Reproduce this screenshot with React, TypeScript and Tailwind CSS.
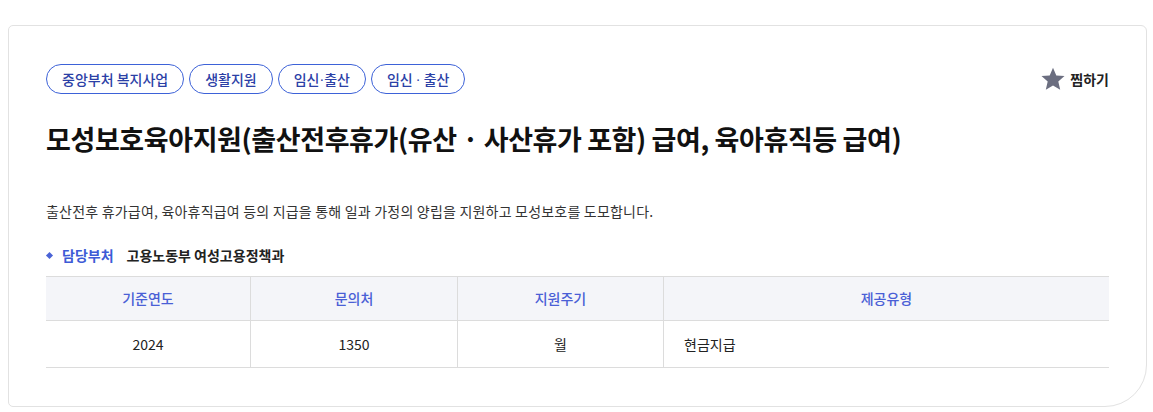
import React from "react";

const tags = ["중앙부처 복지사업", "생활지원", "임신·출산", "임신 · 출산"];

// 태그 안의 가운뎃점은 좁은 라틴 글꼴로 표시
function TagText({ text }: { text: string }) {
  const parts = text.split("·");
  return (
    <>
      {parts.map((p, i) => (
        <React.Fragment key={i}>
          {i > 0 && <span style={{ fontFamily: '"Liberation Sans", sans-serif' }}>·</span>}
          {p}
        </React.Fragment>
      ))}
    </>
  );
}

export default function App() {
  return (
    <div
      className="w-[1153px] h-[412px] bg-white pt-[25px] pl-[8px]"
      style={{ fontFamily: '"Noto Sans CJK KR", "Noto Sans", sans-serif' }}
    >
      <div className="w-[1139px] border border-[#e2e2e2] rounded-tl-[5px] rounded-tr-[6px] rounded-bl-[5px] rounded-br-[42px] px-[37px] pt-[38px] pb-[38px] bg-white">
        {/* 태그 + 찜하기 */}
        <div className="flex items-center justify-between h-[30px]">
          <div className="flex gap-[5px]">
            {tags.map((t) => (
              <span
                key={t}
                className="h-[30px] flex items-center px-[15px] rounded-full border border-[#3d62d8] text-[14px] font-medium text-[#2b40a6] leading-none whitespace-pre"
              >
                <TagText text={t} />
              </span>
            ))}
          </div>
          <button className="flex items-center gap-[5px] text-[14px] font-bold text-[#222] leading-none">
            <svg width="24" height="24" viewBox="0 0 24 24" fill="#6b6e80">
              <path d="M12 0.8l3.3 7.6 8.2.7-6.2 5.5 1.9 8.1L12 18.4l-7.2 4.3 1.9-8.1L.5 9.1l8.2-.7z" />
            </svg>
            찜하기
          </button>
        </div>

        {/* 제목 */}
        <h1 className="mt-[27px] text-[27px] leading-[36px] font-bold text-[#111] tracking-[-0.4px]">
          모성보호육아지원(출산전후휴가(유산 · 사산휴가 포함) 급여, 육아휴직등 급여)
        </h1>

        {/* 설명 */}
        <p className="mt-[44px] text-[14px] leading-[20px] text-[#333] tracking-[0.2px]">
          출산전후 휴가급여, 육아휴직급여 등의 지급을 통해 일과 가정의 양립을 지원하고 모성보호를 도모합니다.
        </p>

        {/* 담당부처 */}
        <div className="mt-[24px] flex items-center h-[20px] text-[14px]">
          <span className="w-[5px] h-[5px] bg-[#4a63d6] rotate-45 ml-[1px] mr-[10px]" />
          <span className="font-bold text-[#3d5bd6]">담당부처</span>
          <span className="ml-[13px] font-bold text-[#222]">고용노동부 여성고용정책과</span>
        </div>

        {/* 표 */}
        <div className="mt-[11px] border-t border-b border-[#dcdcdc] text-[14px]">
          <div className="flex h-[44px] bg-[#f4f5f9] border-b border-[#dcdcdc] text-[#4a5fd6] font-medium">
            <div className="w-[205px] flex items-center justify-center border-r border-[#dcdcdc]">기준연도</div>
            <div className="w-[207px] flex items-center justify-center border-r border-[#dcdcdc]">문의처</div>
            <div className="w-[206px] flex items-center justify-center border-r border-[#dcdcdc]">지원주기</div>
            <div className="flex-1 flex items-center justify-center">제공유형</div>
          </div>
          <div className="flex h-[46px] text-[#222]">
            <div className="w-[205px] flex items-center justify-center border-r border-[#dcdcdc]">2024</div>
            <div className="w-[207px] flex items-center justify-center border-r border-[#dcdcdc]">1350</div>
            <div className="w-[206px] flex items-center justify-center border-r border-[#dcdcdc]">월</div>
            <div className="flex-1 flex items-center pl-[20px]">현금지급</div>
          </div>
        </div>
      </div>
    </div>
  );
}
